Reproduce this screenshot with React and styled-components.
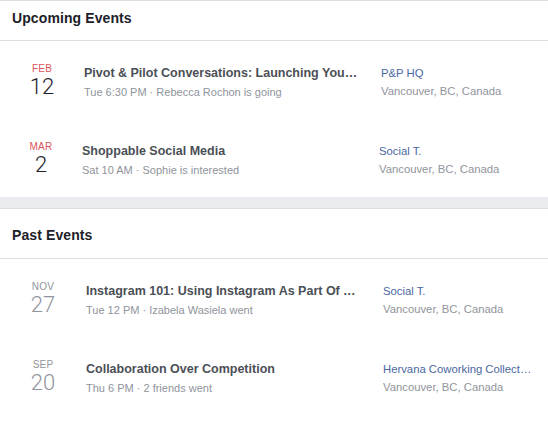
import styled, { createGlobalStyle } from "styled-components";

const GlobalStyle = createGlobalStyle`
  html, body {
    margin: 0;
    padding: 0;
    background: #ffffff;
  }
  body {
    font-family: "Liberation Sans", Helvetica, Arial, sans-serif;
    -webkit-font-smoothing: antialiased;
  }
`;

const Page = styled.div`
  width: 548px;
  height: 422px;
  overflow: hidden;
  background: #fff;
  border-top: 1px solid #dddfe2;
`;

const Section = styled.section`
  background: #fff;
`;

const SectionHeader = styled.div`
  height: ${(p) => p.$height}px;
  padding: ${(p) => p.$top}px 12px ${(p) => p.$bottom}px;
  display: flex;
  align-items: center;
  border-bottom: 1px solid #dddfe2;
  box-sizing: border-box;
`;

const SectionTitle = styled.h2`
  margin: 0;
  font-size: 14px;
  font-weight: 700;
  color: #1d2129;
  letter-spacing: 0.1px;
`;

const Band = styled.div`
  height: 11px;
  background: #e9ebee;
  border-bottom: 1px solid #dddfe2;
`;

const EventRow = styled.div`
  height: 78px;
  display: flex;
  align-items: center;
  padding-left: ${(p) => p.$offset}px;
  padding-top: 4px;
  box-sizing: border-box;
`;

const DateBlock = styled.div`
  width: 44px;
  margin-top: -3px;
  display: flex;
  flex-direction: column;
  align-items: center;
  flex-shrink: 0;
`;

const Month = styled.span`
  font-size: 10px;
  line-height: 12px;
  text-transform: uppercase;
  letter-spacing: 0.2px;
  color: ${(p) => (p.$past ? "#90949c" : "#d8545b")};
`;

const Day = styled.span`
  font-family: Roboto, "Liberation Sans", sans-serif;
  font-size: 22px;
  line-height: 24px;
  font-weight: 300;
  color: ${(p) => (p.$past ? "#90949c" : "#1d2129")};
`;

const Info = styled.div`
  width: 276px;
  margin-left: ${(p) => p.$gap}px;
  margin-right: 21px;
  display: flex;
  flex-direction: column;
  gap: 6px;
  flex-shrink: 0;
  min-width: 0;
`;

const EventTitle = styled.span`
  font-size: 12.5px;
  font-weight: 700;
  color: #4b4f56;
  white-space: nowrap;
  overflow: hidden;
  text-overflow: ellipsis;
`;

const Meta = styled.span`
  font-size: 11px;
  color: #90949c;
  white-space: nowrap;
`;

const Place = styled.div`
  width: 150px;
  display: flex;
  flex-direction: column;
  gap: 6px;
  min-width: 0;
`;

const Host = styled.span`
  font-size: 11.3px;
  color: #4b67a1;
  white-space: nowrap;
  overflow: hidden;
  text-overflow: ellipsis;
`;

const Location = styled.span`
  font-size: 11.3px;
  color: #90949c;
  white-space: nowrap;
`;

const upcoming = [
  {
    month: "Feb",
    day: "12",
    title: "Pivot & Pilot Conversations: Launching Your Business",
    meta: "Tue 6:30 PM · Rebecca Rochon is going",
    host: "P&P HQ",
    offset: 20,
    gap: 20,
  },
  {
    month: "Mar",
    day: "2",
    title: "Shoppable Social Media",
    meta: "Sat 10 AM · Sophie is interested",
    host: "Social T.",
    offset: 19,
    gap: 19,
  },
];

const past = [
  {
    month: "Nov",
    day: "27",
    title: "Instagram 101: Using Instagram As Part Of Your Strategy",
    meta: "Tue 12 PM · Izabela Wasiela went",
    host: "Social T.",
    offset: 21,
    gap: 21,
  },
  {
    month: "Sep",
    day: "20",
    title: "Collaboration Over Competition",
    meta: "Thu 6 PM · 2 friends went",
    host: "Hervana Coworking Collective",
    offset: 21,
    gap: 21,
  },
];

function Event({ event, isPast }) {
  return (
    <EventRow $offset={event.offset}>
      <DateBlock>
        <Month $past={isPast}>{event.month}</Month>
        <Day $past={isPast}>{event.day}</Day>
      </DateBlock>
      <Info $gap={event.gap}>
        <EventTitle>{event.title}</EventTitle>
        <Meta>{event.meta}</Meta>
      </Info>
      <Place>
        <Host>{event.host}</Host>
        <Location>Vancouver, BC, Canada</Location>
      </Place>
    </EventRow>
  );
}

export default function App() {
  return (
    <Page>
      <GlobalStyle />
      <Section>
        <SectionHeader $height={40} $top={0} $bottom={6}>
          <SectionTitle>Upcoming Events</SectionTitle>
        </SectionHeader>
        {upcoming.map((e) => (
          <Event key={e.title} event={e} />
        ))}
      </Section>
      <Band />
      <Section>
        <SectionHeader $height={50} $top={3} $bottom={0}>
          <SectionTitle>Past Events</SectionTitle>
        </SectionHeader>
        {past.map((e) => (
          <Event key={e.title} event={e} isPast />
        ))}
      </Section>
    </Page>
  );
}
